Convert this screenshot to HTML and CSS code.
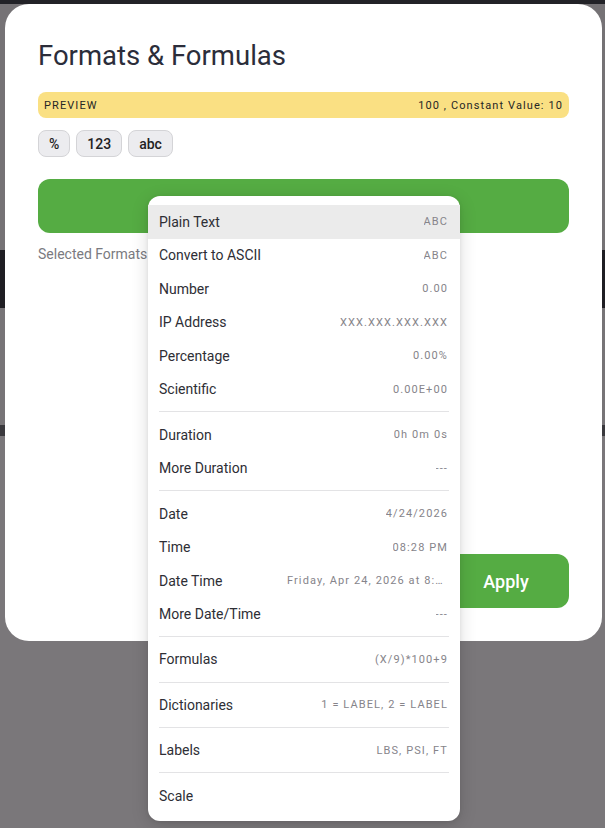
FILE: index.html
```html
<!DOCTYPE html>
<html lang="en">
<head>
<meta charset="utf-8">
<title>Formats &amp; Formulas</title>
<link rel="stylesheet" href="styles.css">
</head>
<body>
<section class="modal">
  <h1 class="title">Formats &amp; Formulas</h1>
  <div class="preview">
    <span class="preview-label">PREVIEW</span>
    <span class="preview-value">100 , Constant Value: 10</span>
  </div>
  <div class="chips">
    <button class="chip">%</button>
    <button class="chip">123</button>
    <button class="chip">abc</button>
  </div>
  <button class="add-btn"></button>
  <p class="selected">Selected Formats</p>
  <div class="footer">
    <button class="apply">Apply</button>
  </div>
</section>
<div class="menu">
  <div class="item active"><span class="label">Plain Text</span><span class="value">ABC</span></div>
  <div class="item"><span class="label">Convert to ASCII</span><span class="value">ABC</span></div>
  <div class="item"><span class="label">Number</span><span class="value">0.00</span></div>
  <div class="item"><span class="label">IP Address</span><span class="value">XXX.XXX.XXX.XXX</span></div>
  <div class="item"><span class="label">Percentage</span><span class="value">0.00%</span></div>
  <div class="item"><span class="label">Scientific</span><span class="value">0.00E+00</span></div>
  <div class="divider"></div>
  <div class="item"><span class="label">Duration</span><span class="value">0h 0m 0s</span></div>
  <div class="item"><span class="label">More Duration</span><span class="value">---</span></div>
  <div class="divider"></div>
  <div class="item"><span class="label">Date</span><span class="value">4/24/2026</span></div>
  <div class="item"><span class="label">Time</span><span class="value">08:28 PM</span></div>
  <div class="item"><span class="label">Date Time</span><span class="value">Friday, Apr 24, 2026 at 8:28 PM</span></div>
  <div class="item"><span class="label">More Date/Time</span><span class="value">---</span></div>
  <div class="divider"></div>
  <div class="item"><span class="label">Formulas</span><span class="value">(X/9)*100+9</span></div>
  <div class="divider"></div>
  <div class="item"><span class="label">Dictionaries</span><span class="value">1 = LABEL, 2 = LABEL</span></div>
  <div class="divider"></div>
  <div class="item"><span class="label">Labels</span><span class="value">LBS, PSI, FT</span></div>
  <div class="divider"></div>
  <div class="item"><span class="label">Scale</span><span class="value"></span></div>
</div>
</body>
</html>
```
FILE: styles.css
```css
* { box-sizing: border-box; }
html, body { margin: 0; padding: 0; }
body {
  width: 605px;
  height: 828px;
  overflow: hidden;
  font-family: Roboto, "Noto Sans", Arial, sans-serif;
  background: linear-gradient(to bottom,
    #222227 0, #222227 4px,
    #757275 4px, #757275 250px,
    #1f1e23 250px, #1f1e23 308px,
    #777477 308px, #777477 425px,
    #3a393d 425px, #3a393d 436px,
    #7a777a 436px);
  position: relative;
}
.modal {
  position: absolute;
  left: 5px;
  top: 4px;
  width: 597px;
  height: 637px;
  background: #fff;
  border-radius: 24px;
  padding: 0 33px 33px 33px;
  display: flex;
  flex-direction: column;
}
.title {
  margin: 37px 0 0 0;
  font-size: 27.5px;
  line-height: 30px;
  font-weight: 400;
  color: #2b2d3a;
}
.preview {
  margin-top: 21px;
  height: 26px;
  background: #fae083;
  border-radius: 8px;
  display: flex;
  align-items: center;
  justify-content: space-between;
  padding: 0 6px;
  font-size: 11px;
  letter-spacing: 1.1px;
  color: #262626;
  font-weight: 400;
}
.chips {
  margin-top: 12px;
  display: flex;
  gap: 6px;
}
.chip {
  height: 27px;
  padding: 0 10px;
  border: 1px solid #d4d4d7;
  background: #ececef;
  border-radius: 8px;
  font-family: Roboto, sans-serif;
  font-size: 14px;
  font-weight: 500;
  color: #1f1f24;
}
.add-btn {
  margin-top: 22px;
  height: 54px;
  width: 100%;
  border: none;
  border-radius: 12px;
  background: #55ac43;
}
.selected {
  margin: 13px 0 0 0;
  font-size: 14px;
  line-height: 17px;
  color: #7a7a80;
}
.footer {
  margin-top: auto;
  display: flex;
  justify-content: flex-end;
}
.apply {
  height: 54px;
  width: 126px;
  border: none;
  border-radius: 12px;
  background: #55ac43;
  color: #fff;
  font-family: Roboto, sans-serif;
  font-size: 18px;
  font-weight: 500;
}
.menu {
  position: absolute;
  left: 148px;
  top: 196px;
  width: 312px;
  background: #fff;
  border-radius: 12px;
  padding: 9px 0 9px 0;
  box-shadow: 0 4px 18px rgba(0, 0, 0, 0.14), 0 1px 4px rgba(0, 0, 0, 0.08);
}
.item {
  height: 33.5px;
  display: flex;
  align-items: center;
  justify-content: space-between;
  padding: 0 12px 0 11px;
  gap: 20px;
}
.item.active { background: #ebebeb; }
.label {
  flex-shrink: 0;
  font-size: 14px;
  color: #2e2e35;
}
.value {
  min-width: 0;
  max-width: 161px;
  overflow: hidden;
  white-space: nowrap;
  text-overflow: ellipsis;
  font-size: 11px;
  font-weight: 400;
  letter-spacing: 1.1px;
  color: #86848a;
}
.divider {
  height: 1px;
  margin: 5.45px 11px;
  background: #e3e3e5;
}
```
